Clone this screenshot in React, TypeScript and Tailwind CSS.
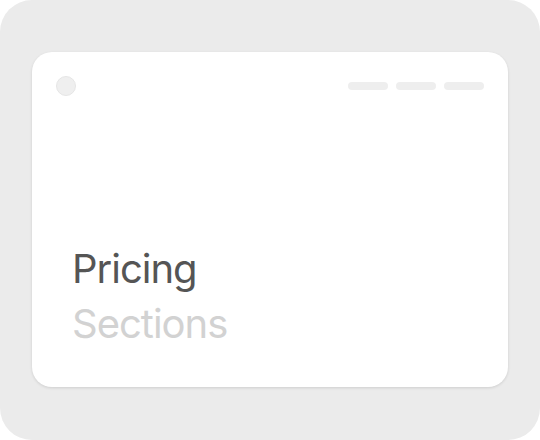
export default function App() {
  return (
    <div className="w-[540px] h-[440px] bg-white" style={{ fontFamily: 'Inter, "Noto Sans", sans-serif' }}>
      <div className="w-full h-full rounded-[32px] bg-[#ebebeb] pt-[52px] px-8 pb-[53px]">
        {/* Card */}
        <div className="h-full rounded-[20px] bg-white shadow-[0_1px_3px_rgba(0,0,0,0.12)] p-6 flex flex-col">
          <div className="flex items-center justify-between">
            <div className="w-5 h-5 rounded-full bg-[#efefef] border border-[#e6e6e6]" />
            <div className="flex items-center gap-2">
              <div className="w-10 h-2 rounded-full bg-[#eeeeee]" />
              <div className="w-10 h-2 rounded-full bg-[#eeeeee]" />
              <div className="w-10 h-2 rounded-full bg-[#eeeeee]" />
            </div>
          </div>
          <div className="flex-1" />
          <div className="pl-4 mb-3 text-[40px] leading-[55px] tracking-[-0.025em]">
            <div className="text-[#555555]">Pricing</div>
            <div className="text-[#d2d2d2]">Sections</div>
          </div>
        </div>
      </div>
    </div>
  );
}
